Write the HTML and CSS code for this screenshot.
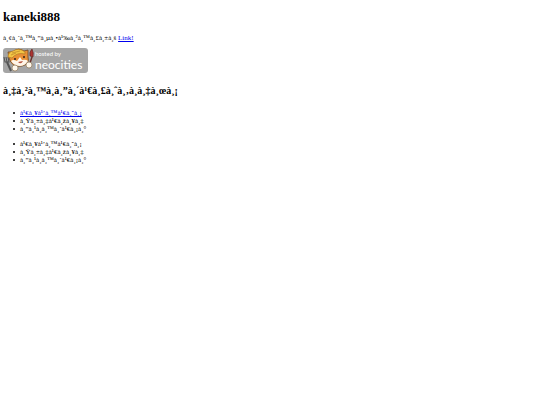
FILE: index.html
```
<!DOCTYPE html>
<html lang="th">
<head>
    <meta charset="UTF-8">
    <meta name="viewport" content="width=device-width, initial-scale=1.0">
    <title>kaneki888</title>
    <link rel="stylesheet" href="styles.css">
</head>
<body>
    <h1>kaneki888</h1>

    <p class="intro">à¸¢à¸´à¸™à¸”à¸µà¸•à¹‰à¸²à¸™à¸£à¸±à¸š <a href="#hobbies">Link!</a></p>

    <a class="badge" href="https://neocities.org" aria-label="hosted by neocities">
        <svg class="cat" viewBox="0 0 32 25" aria-hidden="true">
            <!-- fork -->
            <path d="M4 14 L8 23" stroke="#555" stroke-width="2"/>
            <path d="M1 9 L2 14 L6 14 L5 9 M3 9 L4 14" fill="none" stroke="#555" stroke-width="1.1"/>
            <!-- head -->
            <path d="M6 10 L5 4 L10 4 Q15 -1 21 3 L25 2 L25 9 Q27 16 19 18 Q9 20 6 10Z" fill="#e98f35" stroke="#6d4521" stroke-width=".8"/>
            <path d="M5 9 Q5 4 10 3 Q16 -1 22 4 L22 6 Q14 4 9 10Z" fill="#f2c545" stroke="#b27a24" stroke-width=".7"/>
            <path d="M9 5 L17 3 M8 7 L13 5" stroke="#b27a24" stroke-width=".6"/>
            <path d="M8 13 Q10 11 14 13 L17 9 L19 12 Q23 11 25 13 Q22 18 17 18 Q11 18 8 13Z" fill="#fff5e8"/>
            <circle cx="12" cy="11" r="1" fill="#332217"/>
            <circle cx="21" cy="9" r="1" fill="#332217"/>
            <path d="M15 14 Q18 17 20 13Z" fill="#b8553f"/>
            <!-- brush -->
            <path d="M26 18 L29 9" stroke="#69302a" stroke-width="1.4"/>
            <path d="M27 8 Q26 4 29 1 Q31 5 30 9Z" fill="#ad3432" stroke="#54201f" stroke-width=".6"/>
            <!-- paws -->
            <circle cx="12" cy="20" r="3" fill="#fff8ec" stroke="#8c7558" stroke-width=".7"/>
            <circle cx="26" cy="17" r="3" fill="#fff8ec" stroke="#8c7558" stroke-width=".7"/>
        </svg>
        <span class="badge-text">
            <span class="hosted">hosted by</span>
            <span class="neocities">neocities</span>
        </span>
    </a>

    <h2 id="hobbies">à¸‡à¸²à¸™à¸à¸”à¸´à¹€à¸£à¸ˆà¸‚à¸à¸‡à¸œà¸¡</h2>

    <ul>
        <li><a href="#hobbies">à¹€à¸¥à¹’à¸™à¹€à¸ˆà¸¡</a></li>
        <li>à¸Ÿà¸±à¸‡à¹€à¸žà¸¥à¸‡</li>
        <li>à¸”à¸¹à¸à¸™à¸´à¹€à¸¡à¸°</li>
    </ul>

    <ul>
        <li>à¹€à¸¥à¹’à¸™à¹€à¸ˆà¸¡</li>
        <li>à¸Ÿà¸±à¸‡à¹€à¸žà¸¥à¸‡</li>
        <li>à¸”à¸¹à¸à¸™à¸´à¹€à¸¡à¸°</li>
    </ul>
</body>
</html>
```
FILE: styles.css
```
body {
    margin: 9px 3px;
    background: #fff;
    color: #000;
    font-family: "Liberation Serif", "Times New Roman", serif;
    font-size: 7px;
    line-height: 8px;
}

h1 {
    margin: 0 0 9px;
    font-size: 13px;
    line-height: 16px;
}

h2 {
    margin: 12px 0;
    font-size: 10px;
    line-height: 12px;
}

a {
    color: #0000ee;
}

.intro {
    margin: 0 0 6px;
}

.badge {
    display: flex;
    width: 85px;
    height: 25px;
    background: #a5a5a5;
    border-radius: 3px;
    color: #fff;
    text-decoration: none;
}

.cat {
    width: 32px;
    height: 25px;
}

.badge-text {
    display: flex;
    flex-direction: column;
    padding-top: 2px;
    font-family: Lato, "Open Sans", sans-serif;
}

.hosted {
    font-size: 6px;
    line-height: 8px;
}

.neocities {
    font-size: 12px;
    line-height: 14px;
}

ul {
    margin: 0 0 7px;
    padding-left: 10px;
    list-style: none;
}

li {
    display: flex;
    align-items: center;
    gap: 5px;
}

li::before {
    content: "";
    width: 2px;
    height: 2px;
    background: #000;
    border-radius: 50%;
}
```
